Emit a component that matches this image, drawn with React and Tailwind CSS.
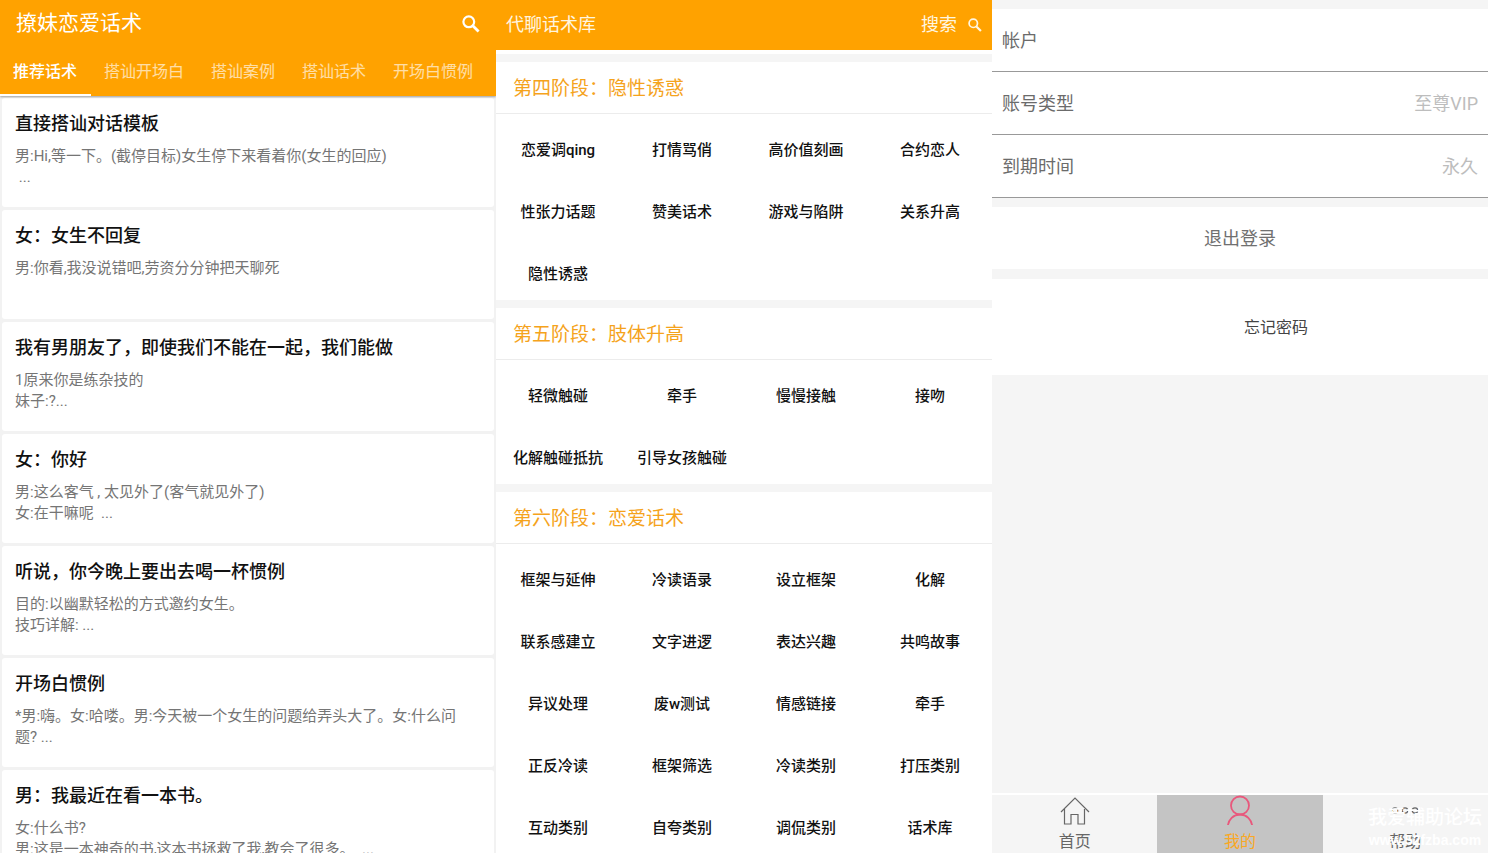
import { useState } from "react";
import clsx from "clsx";

const TABS = ["推荐话术", "搭讪开场白", "搭讪案例", "搭讪话术", "开场白惯例"];

const POSTS = [
  { title: "直接搭讪对话模板", lines: ["男:Hi,等一下。(截停目标)女生停下来看着你(女生的回应)", " ..."] },
  { title: "女：女生不回复", lines: ["男:你看,我没说错吧,劳资分分钟把天聊死"] },
  { title: "我有男朋友了，即使我们不能在一起，我们能做", lines: ["1原来你是练杂技的", "妹子:?..."] },
  { title: "女：你好", lines: ["男:这么客气 , 太见外了(客气就见外了)", "女:在干嘛呢  ..."] },
  { title: "听说，你今晚上要出去喝一杯惯例", lines: ["目的:以幽默轻松的方式邀约女生。", "技巧详解: ..."] },
  { title: "开场白惯例", lines: ["*男:嗨。女:哈喽。男:今天被一个女生的问题给弄头大了。女:什么问题? ..."] },
  { title: "男：我最近在看一本书。", lines: ["女:什么书?", "男:这是一本神奇的书,这本书拯救了我,教会了很多。  ..."] },
];

const STAGES = [
  {
    title: "第四阶段：隐性诱惑",
    items: ["恋爱调qing", "打情骂俏", "高价值刻画", "合约恋人", "性张力话题", "赞美话术", "游戏与陷阱", "关系升高", "隐性诱惑"],
  },
  {
    title: "第五阶段：肢体升高",
    items: ["轻微触碰", "牵手", "慢慢接触", "接吻", "化解触碰抵抗", "引导女孩触碰"],
  },
  {
    title: "第六阶段：恋爱话术",
    items: [
      "框架与延伸", "冷读语录", "设立框架", "化解",
      "联系感建立", "文字进逻", "表达兴趣", "共鸣故事",
      "异议处理", "废w测试", "情感链接", "牵手",
      "正反冷读", "框架筛选", "冷读类别", "打压类别",
      "互动类别", "自夸类别", "调侃类别", "话术库",
    ],
  },
];

const ACCOUNT = [
  { label: "帐户", value: "" },
  { label: "账号类型", value: "至尊VIP" },
  { label: "到期时间", value: "永久" },
];

function SearchIcon({ className }) {
  return (
    <svg viewBox="0 0 18 18" fill="none" stroke="currentColor" className={className} aria-hidden>
      <circle cx="6.8" cy="6.8" r="5.4" strokeWidth="2.2" />
      <path d="M10.8 10.8 16.6 16.6" strokeWidth="2.8" />
    </svg>
  );
}

function HomeIcon() {
  return (
    <svg viewBox="0 0 30 30" fill="none" stroke="currentColor" strokeWidth="1.2" className="size-[30px]" aria-hidden>
      <path d="M1 17 15 3l14 14" />
      <path d="M4.5 14v15H11v-9.5h7V29h6.5V14" />
    </svg>
  );
}

function UserIcon() {
  return (
    <svg viewBox="0 0 30 30" fill="none" stroke="currentColor" strokeWidth="1.8" className="size-[30px] text-[#e8587c]" aria-hidden>
      <circle cx="15" cy="10.5" r="9" />
      <path d="M2.8 31c.6-6.5 5.6-11.5 12.2-11.5S26.6 24.5 27.2 31" />
    </svg>
  );
}

function MoreIcon() {
  return (
    <svg viewBox="0 0 30 30" fill="none" stroke="currentColor" strokeWidth="1.2" className="size-[30px]" aria-hidden>
      <circle cx="5" cy="15.5" r="2.7" />
      <circle cx="15" cy="15.5" r="2.7" />
      <circle cx="25" cy="15.5" r="2.7" />
    </svg>
  );
}

const NAV = [
  { label: "首页", Icon: HomeIcon },
  { label: "我的", Icon: UserIcon },
  { label: "帮助", Icon: MoreIcon },
];

function PostFeed() {
  const [tab, setTab] = useState(0);

  return (
    <section className="flex min-w-0 flex-col overflow-hidden bg-[#f2f2f2]">
      <header className="z-10 shrink-0 bg-[#ffa200] text-white shadow-[0_1px_2px_rgba(0,0,0,0.35)]">
        <div className="flex h-12 items-center justify-between px-4">
          <h1 className="text-[21px]">撩妹恋爱话术</h1>
          <button aria-label="搜索">
            <SearchIcon className="size-[18px]" />
          </button>
        </div>
        <nav className="flex h-12 overflow-hidden">
          {TABS.map((t, i) => (
            <button
              key={t}
              onClick={() => setTab(i)}
              className={clsx(
                "shrink-0 border-b-2 pt-[2px] pr-[14px] pl-[13px] text-base",
                i === tab ? "border-white font-medium text-white" : "border-transparent text-white/65"
              )}
            >
              {t}
            </button>
          ))}
        </nav>
      </header>

      <div className="space-y-[3px] px-[2px] pt-[2px]">
        {POSTS.map((p) => (
          <article key={p.title} className="h-[109px] rounded-[3px] bg-white pt-3 pr-6 pl-[13px]">
            <h2 className="text-lg leading-[27px] font-medium text-[#111]">{p.title}</h2>
            <div className="mt-[9px] text-[15px] leading-[21px] text-[#757575]">
              {p.lines.map((l) => (
                <p key={l} className="whitespace-pre-wrap">{l}</p>
              ))}
            </div>
          </article>
        ))}
      </div>
    </section>
  );
}

function Library() {
  return (
    <section className="flex min-w-0 flex-col overflow-hidden bg-[#f5f5f5]">
      <header className="flex h-[50px] shrink-0 items-center justify-between bg-[#ffa200] px-[10px] text-lg text-[#fff6e0]">
        <h1>代聊话术库</h1>
        <button className="flex items-center gap-[11px]">
          搜索
          <SearchIcon className="size-[14px]" />
        </button>
      </header>
      <div className="h-1 shrink-0 bg-white" />

      {STAGES.map((s) => (
        <div key={s.title} className="mt-2 shrink-0 bg-white">
          <h2 className="border-b border-[#ececec] px-[17px] pt-[3px] text-[19px] leading-[48px] text-[#f5a31c]">{s.title}</h2>
          <div className="grid grid-cols-4 gap-y-3 pt-[11px] pb-px">
            {s.items.map((item) => (
              <button key={item} className="h-[50px] text-[15px] font-medium whitespace-nowrap text-[#111]">
                {item}
              </button>
            ))}
          </div>
        </div>
      ))}
    </section>
  );
}

function Profile() {
  const [active, setActive] = useState(1);

  return (
    <section className="relative flex min-w-0 flex-col overflow-hidden bg-[#f5f5f5]">
      <dl className="mt-[9px] text-lg text-[#6b6b6b]">
        {ACCOUNT.map((row) => (
          <div key={row.label} className="flex h-[63px] items-center justify-between border-b border-[#999] bg-white px-[10px] pt-px">
            <dt>{row.label}</dt>
            <dd className="text-[#bdbdbd]">{row.value}</dd>
          </div>
        ))}
      </dl>
      <button className="mt-[9px] h-[62px] shrink-0 bg-white pt-[2px] text-lg text-[#707070]">退出登录</button>
      <div className="mt-[10px] flex h-24 shrink-0 items-center justify-center bg-white pt-[2px] pl-[72px]">
        <button className="text-base text-[#444]">忘记密码</button>
      </div>

      <nav className="mt-auto grid h-[60px] shrink-0 grid-cols-3 border-t-2 border-white">
        {NAV.map(({ label, Icon }, i) => (
          <button
            key={label}
            onClick={() => setActive(i)}
            className={clsx(
              "flex flex-col items-center gap-1 text-base leading-[26px]",
              i === active ? "bg-[#c4c4c4] text-[#f9a825]" : "text-[#666]"
            )}
          >
            <Icon />
            {label}
          </button>
        ))}
      </nav>

      <div className="pointer-events-none absolute right-[6px] bottom-[2px] text-center font-['Liberation_Sans','Noto_Sans_CJK_SC',sans-serif] text-white">
        <p className="text-[19px] leading-[22px] font-medium">我爱辅助论坛</p>
        <p className="text-sm leading-[22px] font-bold">www.52fzba.com</p>
      </div>
    </section>
  );
}

export default function App() {
  return (
    <main className="grid h-screen grid-cols-3 overflow-hidden font-[Roboto,'Noto_Sans_CJK_SC',sans-serif]">
      <PostFeed />
      <Library />
      <Profile />
    </main>
  );
}
